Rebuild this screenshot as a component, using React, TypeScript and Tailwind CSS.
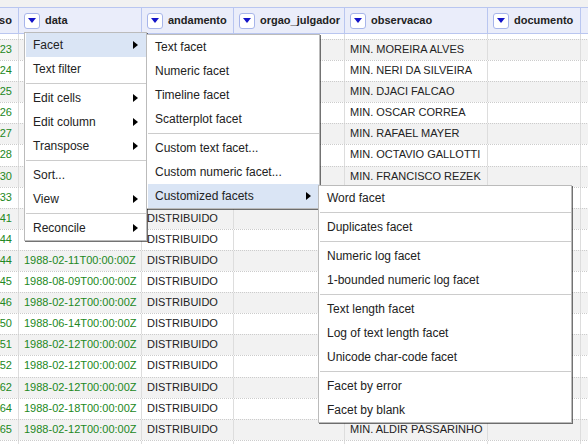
import React from 'react';

const WIDTHS = [82, 123, 92, 111, 143, 93, 100];
const HEADERS = ['processo', 'data', 'andamento', 'orgao_julgador', 'observacao', 'documento', ''];

type Row = { n: string; d: string; a: string; o: string };

const ROWS: Row[] = [
  { n: '23', d: '', a: '', o: 'MIN. MOREIRA ALVES' },
  { n: '24', d: '', a: '', o: 'MIN. NERI DA SILVEIRA' },
  { n: '25', d: '', a: '', o: 'MIN. DJACI FALCAO' },
  { n: '26', d: '', a: '', o: 'MIN. OSCAR CORREA' },
  { n: '27', d: '', a: '', o: 'MIN. RAFAEL MAYER' },
  { n: '28', d: '', a: '', o: 'MIN. OCTAVIO GALLOTTI' },
  { n: '30', d: '', a: '', o: 'MIN. FRANCISCO REZEK' },
  { n: '33', d: '', a: '', o: '' },
  { n: '41', d: '', a: 'DISTRIBUIDO', o: '' },
  { n: '44', d: '', a: 'DISTRIBUIDO', o: '' },
  { n: '44', d: '1988-02-11T00:00:00Z', a: 'DISTRIBUIDO', o: '' },
  { n: '45', d: '1988-08-09T00:00:00Z', a: 'DISTRIBUIDO', o: '' },
  { n: '46', d: '1988-02-12T00:00:00Z', a: 'DISTRIBUIDO', o: '' },
  { n: '50', d: '1988-06-14T00:00:00Z', a: 'DISTRIBUIDO', o: '' },
  { n: '51', d: '1988-02-12T00:00:00Z', a: 'DISTRIBUIDO', o: '' },
  { n: '52', d: '1988-02-12T00:00:00Z', a: 'DISTRIBUIDO', o: '' },
  { n: '62', d: '1988-02-12T00:00:00Z', a: 'DISTRIBUIDO', o: '' },
  { n: '64', d: '1988-02-18T00:00:00Z', a: 'DISTRIBUIDO', o: '' },
  { n: '65', d: '1988-02-12T00:00:00Z', a: 'DISTRIBUIDO', o: 'MIN. ALDIR PASSARINHO' },
  { n: '', d: '', a: '', o: '' },
];

function DropButton() {
  return (
    <span className="flex h-[16px] w-[16px] shrink-0 items-center justify-center rounded-[3px] border border-[#a7b5ea] bg-white">
      <span className="h-0 w-0 border-x-[4px] border-t-[5px] border-x-transparent border-t-[#1414c8]" />
    </span>
  );
}

type Item = { label: string; sub?: boolean; active?: boolean } | 'sep';

function Menu({ items, className }: { items: Item[]; className: string }) {
  return (
    <div className={`absolute border border-[#bbb] bg-white pl-[1px] shadow-[1px_1px_0_rgba(0,0,0,0.55)] ${className}`}>
      {items.map((it, i) =>
        it === 'sep' ? (
          <div key={i} className="my-[2px] h-px bg-[#ccc]" />
        ) : (
          <div
            key={i}
            className={`relative flex h-[24px] items-center whitespace-nowrap pl-[7px] text-[12px] text-[#222] ${
              it.active ? 'bg-[#dae5f5]' : ''
            }`}
          >
            {it.label}
            {it.sub && (
              <span className="absolute right-[8px] top-1/2 h-0 w-0 -translate-y-1/2 border-y-[4px] border-l-[5px] border-y-transparent border-l-black" />
            )}
          </div>
        )
      )}
    </div>
  );
}

export default function App() {
  const menu1: Item[] = [
    { label: 'Facet', sub: true, active: true },
    { label: 'Text filter' },
    'sep',
    { label: 'Edit cells', sub: true },
    { label: 'Edit column', sub: true },
    { label: 'Transpose', sub: true },
    'sep',
    { label: 'Sort...' },
    { label: 'View', sub: true },
    'sep',
    { label: 'Reconcile', sub: true },
  ];
  const menu2: Item[] = [
    { label: 'Text facet' },
    { label: 'Numeric facet' },
    { label: 'Timeline facet' },
    { label: 'Scatterplot facet' },
    'sep',
    { label: 'Custom text facet...' },
    { label: 'Custom numeric facet...' },
    { label: 'Customized facets', sub: true, active: true },
  ];
  const menu3: Item[] = [
    { label: 'Word facet' },
    'sep',
    { label: 'Duplicates facet' },
    'sep',
    { label: 'Numeric log facet' },
    { label: '1-bounded numeric log facet' },
    'sep',
    { label: 'Text length facet' },
    { label: 'Log of text length facet' },
    { label: 'Unicode char-code facet' },
    'sep',
    { label: 'Facet by error' },
    { label: 'Facet by blank' },
  ];

  return (
    <div className="relative h-[444px] w-[588px] overflow-hidden bg-white font-['Liberation_Sans',Arial,sans-serif] text-[#222]">
      <div className="h-[7px] bg-[#f1f1f1]" />
      <div className="ml-[-63px] flex w-max flex-col">
        {/* header */}
        <div className="flex h-[27px] border-y border-[#b9c6f0] bg-[#eaedfa]">
          {HEADERS.map((h, i) => (
            <div
              key={i}
              style={{ width: WIDTHS[i] }}
              className="flex shrink-0 items-center gap-[5px] border-r border-[#b9c6f0] pl-[5px] text-[11px] font-bold"
            >
              {h && <DropButton />}
              {h && <span className="whitespace-nowrap">{h}</span>}
            </div>
          ))}
        </div>
        {/* spacer */}
        <div className="flex h-[5px]">
          {WIDTHS.map((w, i) => (
            <div key={i} style={{ width: w }} className="shrink-0 border-r border-[#ddd]" />
          ))}
        </div>
        {ROWS.map((r, ri) => {
          const cells = [r.n, r.d, r.a, '', r.o, '', ''];
          return (
            <div key={ri} className={`flex h-[21.1px] border-t border-dotted border-[#ccc] ${ri % 2 === 0 ? 'bg-[#f2f2f2]' : 'bg-white'}`}>
              {cells.map((c, ci) => (
                <div
                  key={ci}
                  style={{ width: WIDTHS[ci] }}
                  className={`shrink-0 overflow-hidden whitespace-nowrap border-r border-[#ddd] pt-[2px] text-[11px] leading-[14px] ${
                    ci === 0 ? 'pr-[6px] text-right text-[#282]' : 'pl-[5px]'
                  } ${ci === 1 ? 'text-[#282]' : ''}`}
                >
                  {c}
                </div>
              ))}
            </div>
          );
        })}
      </div>

      <Menu items={menu1} className="left-[24px] top-[32px] z-10 w-[123px]" />
      <Menu items={menu2} className="left-[146px] top-[34px] z-20 w-[174px]" />
      <Menu items={menu3} className="left-[318px] top-[185px] z-30 w-[254px]" />
    </div>
  );
}
